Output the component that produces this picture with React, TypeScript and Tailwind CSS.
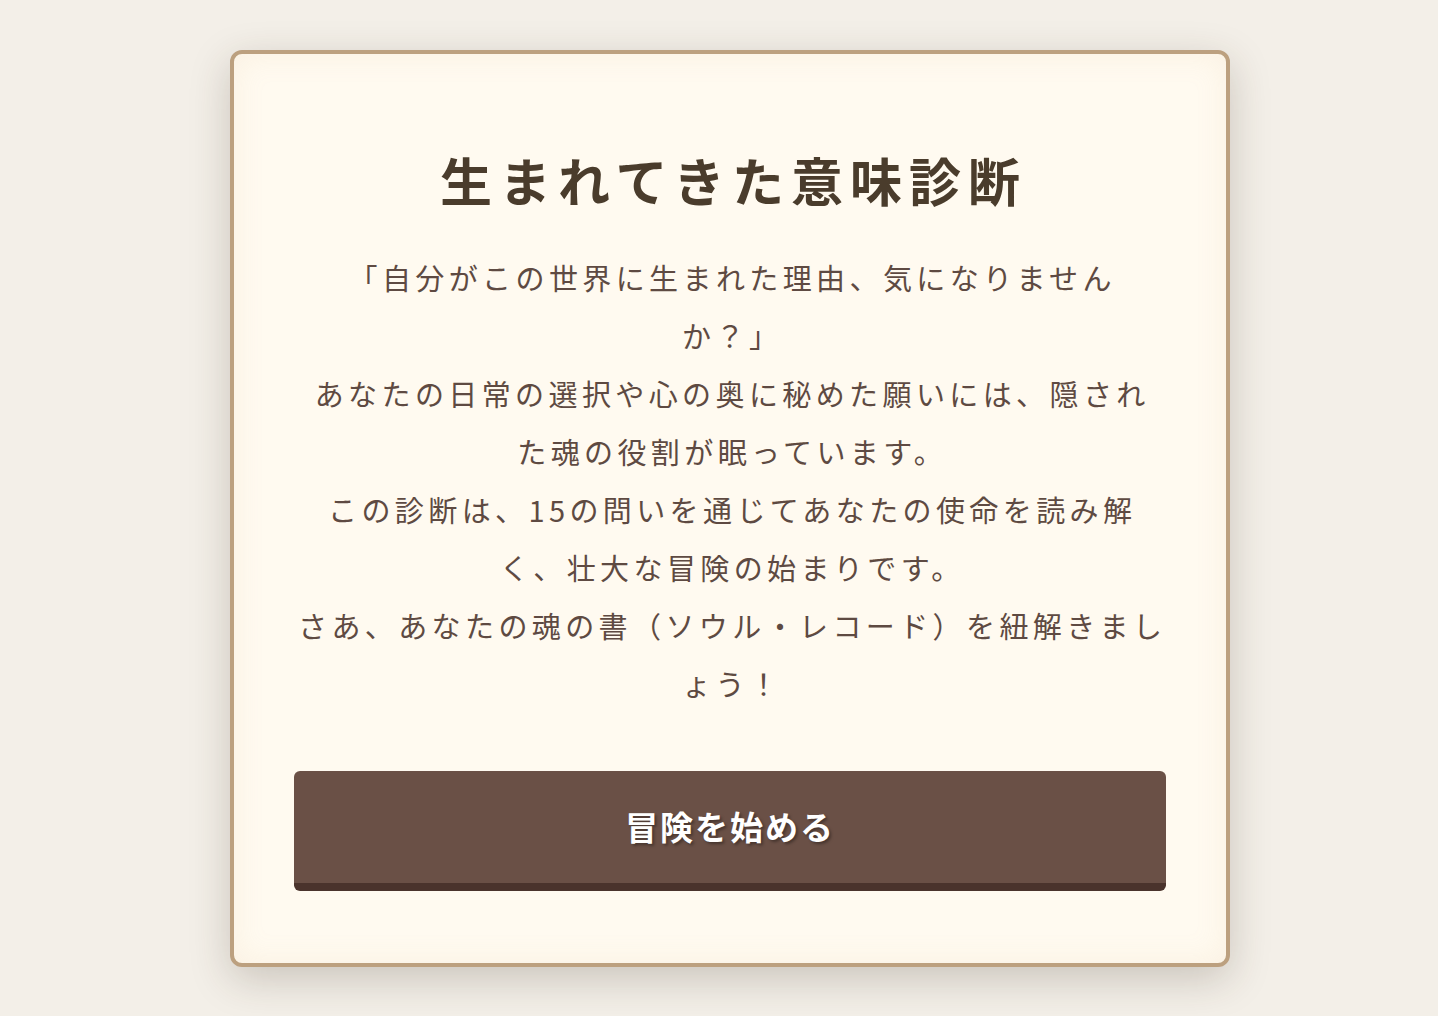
import React from "react";

const lines = [
  "「自分がこの世界に生まれた理由、気になりません",
  "か？」",
  "あなたの日常の選択や心の奥に秘めた願いには、隠され",
  "た魂の役割が眠っています。",
  "この診断は、15の問いを通じてあなたの使命を読み解",
  "く、壮大な冒険の始まりです。",
  "さあ、あなたの魂の書（ソウル・レコード）を紐解きまし",
  "ょう！",
];

export default function App() {
  return (
    <div
      className="min-h-screen w-full bg-[#f3efe8] pt-[50px] pl-[22px] flex justify-center items-start"
      style={{ fontFamily: '"Noto Sans CJK JP", "Noto Sans", sans-serif' }}
    >
      <div className="w-[1000px] rounded-[12px] border-4 border-[#bca07f] bg-[#fffaf0] px-[60px] pt-[90px] pb-[72px] shadow-[0_12px_40px_rgba(60,45,30,0.22),inset_0_0_30px_rgba(220,190,140,0.15)]">
        <h1 className="text-center text-[52px] leading-[72px] font-bold tracking-[7px] text-[#4a3c2c] mr-[-7px]">
          生まれてきた意味診断
        </h1>
        <div className="mt-[32px] text-center text-[#5e4a42] text-[29px] leading-[58px] tracking-[4.4px]">
          {lines.map((l, i) => (
            <div key={i} className="whitespace-nowrap mr-[-4.4px]">
              {l}
            </div>
          ))}
        </div>
        <button className="mt-[59px] w-full h-[120px] rounded-[6px] bg-[#6a5046] border-b-[8px] border-[#4a332c] text-white text-[33px] font-bold tracking-[2px] [text-shadow:2px_2px_3px_rgba(0,0,0,0.35)]">
          冒険を始める
        </button>
      </div>
    </div>
  );
}
